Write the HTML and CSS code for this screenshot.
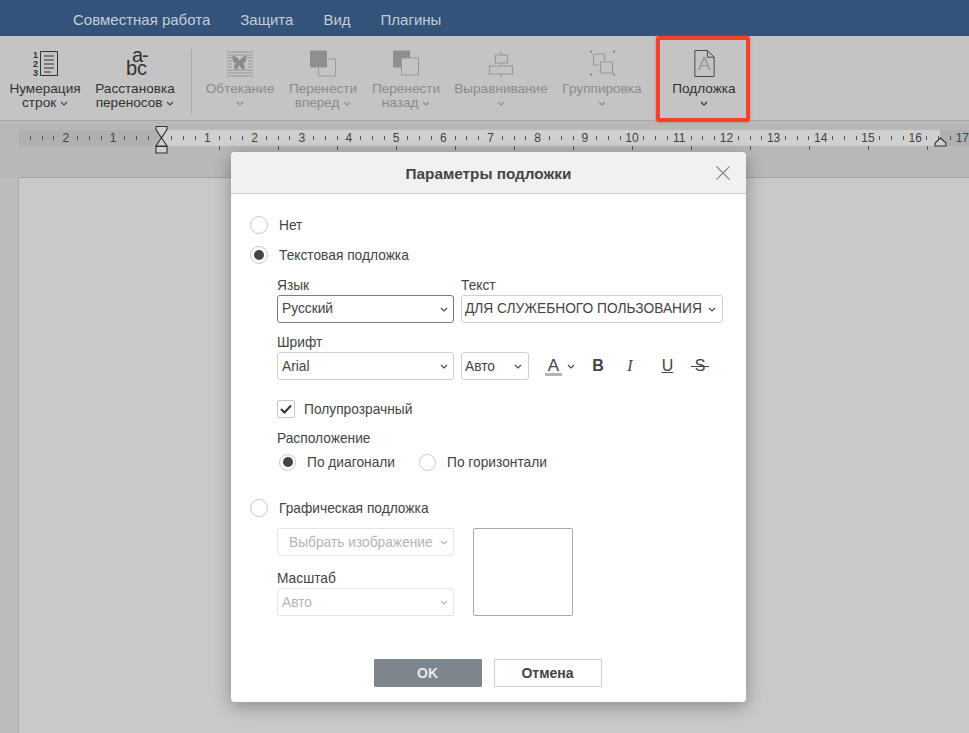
FILE: index.html
```html
<!DOCTYPE html>
<html lang="ru">
<head>
  <meta charset="UTF-8">
  <title>Параметры подложки</title>
  <link rel="stylesheet" href="styles.css">
</head>
<body>

  <svg class="sprite" width="0" height="0">
    <symbol id="chev" viewBox="0 0 8 5"><path d="M1 1l3 3 3-3" fill="none" stroke="currentColor" stroke-width="1.1"/></symbol>
  </svg>

  <nav class="tabs">
    <span>Совместная работа</span>
    <span>Защита</span>
    <span>Вид</span>
    <span>Плагины</span>
  </nav>

  <div class="toolbar">
    <div class="tool tool-num">
      <svg class="icon" width="28" height="27" viewBox="0 0 28 27">
        <text class="tiny"><tspan x="2" y="8">1</tspan><tspan x="2" y="17">2</tspan><tspan x="2" y="26">3</tspan></text>
        <path d="M9.500 1.500h17v24h-17zM13 6h10M13 10h10M13 14h10M13 18h10M13 22h7" fill="none" stroke="#333" stroke-width="1"/>
      </svg>
      <div class="label">Нумерация<br>строк <svg class="chev"><use href="#chev"/></svg></div>
    </div>
    <div class="tool tool-hyph">
      <svg class="icon" width="26" height="27" viewBox="0 0 26 27">
        <text class="big"><tspan x="10" y="12" letter-spacing="-1">a-</tspan><tspan x="4" y="25">bc</tspan></text>
      </svg>
      <div class="label">Расстановка<br>переносов <svg class="chev"><use href="#chev"/></svg></div>
    </div>
    <div class="divider"></div>
    <div class="tool off tool-wrap">
      <svg class="icon" width="28" height="26" viewBox="0 0 28 26">
        <path d="M1 1.500h26M1 4.500h26M1 7.500h5M22 7.500h5M1 10.500h5M22 10.500h5M1 13.500h5M22 13.500h5M1 16.500h5M22 16.500h5M1 19.500h26M1 22.500h26M1 25.500h26" stroke="#969696" stroke-width="1"/>
        <path d="M13.500 10C11 6 8 5 6.500 5.500 6 9 7 12 10 13c-2 1-2.500 4-1 6 2 .5 4-2 4.500-5 .5 3 2.500 5.500 4.500 5 1.500-2 1-5-1-6 3-1 4-4 3.500-7.500C19 5 16 6 13.500 10z" fill="#8c8c8c"/>
      </svg>
      <div class="label">Обтекание<br><svg class="chev"><use href="#chev"/></svg></div>
    </div>
    <div class="tool off tool-front">
      <svg class="icon" width="26" height="26" viewBox="0 0 26 26">
        <path d="M8.500 17v8.500h17V8.500H18" fill="none" stroke="#999" stroke-width="1"/>
        <rect x="0" y="0" width="17" height="17" rx="1" fill="#8f8f8f"/>
      </svg>
      <div class="label">Перенести<br>вперед <svg class="chev"><use href="#chev"/></svg></div>
    </div>
    <div class="tool off tool-back">
      <svg class="icon" width="26" height="26" viewBox="0 0 26 26">
        <rect x="0" y="0" width="17" height="17" fill="#8f8f8f"/>
        <rect x="8.500" y="7.500" width="17" height="17" fill="#c3c4c3" stroke="#999"/>
      </svg>
      <div class="label">Перенести<br>назад <svg class="chev"><use href="#chev"/></svg></div>
    </div>
    <div class="tool off tool-align">
      <svg class="icon" width="24" height="26" viewBox="0 0 24 26">
        <path d="M12 1v3.500M12 12.500v3M12 23.500v3.500M6.500 4.500h12v8h-12zM.5 15.500h23v8H.5z" fill="none" stroke="#999" stroke-width="1.200"/>
      </svg>
      <div class="label">Выравнивание<br><svg class="chev"><use href="#chev"/></svg></div>
    </div>
    <div class="tool off tool-group">
      <svg class="icon" width="25" height="26" viewBox="0 0 25 26">
        <path d="M3.500 3.500h11v7M8.500 14.500h-5v-11M10.500 11.500h12v11h-12z" fill="none" stroke="#999" stroke-width="1.200"/>
        <path d="M0 0h2v2H0zM23 0h2v2h-2zM0 23h2v2H0zM23 23h2v2h-2z" fill="#888"/>
      </svg>
      <div class="label">Группировка<br><svg class="chev"><use href="#chev"/></svg></div>
    </div>
    <div class="tool tool-mark">
      <svg class="icon" width="21" height="28" viewBox="0 0 21 28">
        <path d="M.5.500h13l7 7v20H.5zM13.500.500v7h7" fill="none" stroke="#444" stroke-width="1"/>
        <text x="3.500" y="21" class="mark-a">A</text>
      </svg>
      <div class="label">Подложка<br><svg class="chev chev-dark"><use href="#chev"/></svg></div>
      <div class="highlight"></div>
    </div>
  </div>

  <div class="ruler-area">
    <div class="ruler">
      <i></i><i></i><i></i><b>2</b><i></i><i></i><i></i><b>1</b><i></i><i></i><i></i><b></b>
      <i></i><i></i><i></i><b>1</b><i></i><i></i><i></i><b>2</b><i></i><i></i><i></i><b>3</b>
      <i></i><i></i><i></i><b>4</b><i></i><i></i><i></i><b>5</b><i></i><i></i><i></i><b>6</b>
      <i></i><i></i><i></i><b>7</b><i></i><i></i><i></i><b>8</b><i></i><i></i><i></i><b>9</b>
      <i></i><i></i><i></i><b>10</b><i></i><i></i><i></i><b>11</b><i></i><i></i><i></i><b>12</b>
      <i></i><i></i><i></i><b>13</b><i></i><i></i><i></i><b>14</b><i></i><i></i><i></i><b>15</b>
      <i></i><i></i><i></i><b>16</b><i></i><i></i><i></i><b>17</b>
      <svg class="marker-left" width="13" height="28" viewBox="0 0 13 28">
        <path d="M1 .5h11v3L1 20h11L1 3.500V.5" fill="#d0d0d0" stroke="#333" stroke-width="1.100"/>
        <path d="M1 20.500h11v6.500H1z" fill="#d0d0d0" stroke="#333" stroke-width="1.100"/>
      </svg>
      <svg class="marker-right" width="13" height="10" viewBox="0 0 13 10">
        <path d="M6.500 1L12 6v3H1V6z" fill="#d0d0d0" stroke="#333" stroke-width="1.100"/>
      </svg>
    </div>
    <div class="tabstops"></div>
  </div>

  <div class="canvas">
    <div class="page"></div>
  </div>

  <div class="dialog">
    <div class="dialog-head">
      Параметры подложки
      <svg class="close" width="14" height="14" viewBox="0 0 14 14"><path d="M.5.5l13 13M13.500.5l-13 13" stroke="#888" stroke-width="1.100"/></svg>
    </div>

    <div class="dialog-body">
      <div class="opt"><span class="radio"></span>Нет</div>
      <div class="opt opt-second"><span class="radio on"></span>Текстовая подложка</div>

      <div class="fields">
        <div class="field-row row-lang">
          <div class="field w177">
            <label>Язык</label>
            <div class="select active">Русский<svg class="chev"><use href="#chev"/></svg></div>
          </div>
          <div class="field w262">
            <label>Текст</label>
            <div class="select tight">ДЛЯ СЛУЖЕБНОГО ПОЛЬЗОВАНИЯ<svg class="chev"><use href="#chev"/></svg></div>
          </div>
        </div>

        <div class="field-row row-font">
          <div class="field w177">
            <label>Шрифт</label>
            <div class="select">Arial<svg class="chev"><use href="#chev"/></svg></div>
          </div>
          <div class="field w68">
            <div class="select tight">Авто<svg class="chev"><use href="#chev"/></svg></div>
          </div>
          <div class="fmt">
            <span class="fmt-color">A</span><svg class="chev"><use href="#chev"/></svg>
            <span class="fmt-b">B</span>
            <span class="fmt-i">I</span>
            <span class="fmt-u">U</span>
            <span class="fmt-s">S</span>
          </div>
        </div>

        <div class="check-row">
          <span class="check"><svg width="12" height="10" viewBox="0 0 12 10"><path d="M1 5l3.500 3.500L11 1.500" fill="none" stroke="#333" stroke-width="2"/></svg></span>
          Полупрозрачный
        </div>

        <div class="place-title">Расположение</div>
        <div class="place-row">
          <div class="opt small"><span class="radio on"></span>По диагонали</div>
          <div class="opt small"><span class="radio"></span>По горизонтали</div>
        </div>
      </div>

      <div class="opt opt-image"><span class="radio"></span>Графическая подложка</div>

      <div class="image-row">
        <div class="w177">
          <div class="select disabled center">Выбрать изображение<svg class="chev"><use href="#chev"/></svg></div>
          <label class="scale-label">Масштаб</label>
          <div class="select disabled">Авто<svg class="chev"><use href="#chev"/></svg></div>
        </div>
        <div class="preview"></div>
      </div>
    </div>

    <div class="dialog-foot">
      <button class="btn btn-ok">OK</button>
      <button class="btn">Отмена</button>
    </div>
  </div>

</body>
</html>
```

FILE: styles.css
```css
* {
  box-sizing: border-box;
}

html, body {
  height: 100%;
}

body {
  margin: 0;
  overflow: hidden;
  position: relative;
  display: flex;
  flex-direction: column;
  font-family: "Liberation Sans", Arial, sans-serif;
  font-size: 14px;
  color: #444;
  background: #bbb;
}

.sprite {
  position: absolute;
}

.chev {
  width: 8px;
  height: 5px;
  vertical-align: 1px;
  color: #444;
}

/* top tabs */
.tabs {
  height: 36px;
  flex: none;
  background: #34537a;
  color: #c3cdd9;
  display: flex;
  align-items: center;
  gap: 30px;
  padding: 3px 0 0 73px;
  font-size: 15px;
}

/* toolbar */
.toolbar {
  height: 85px;
  flex: none;
  background: #c3c4c3;
  border-bottom: 1px solid #a9a9a9;
  display: flex;
  align-items: flex-start;
  padding-top: 14px;
  font-size: 13.600px;
  color: #333;
}

.tool {
  position: relative;
  text-align: center;
  flex: none;
}

.tool .icon {
  display: block;
  margin: 0 auto;
  height: 27px;
  overflow: visible;
}

.label {
  margin-top: 5px;
  line-height: 14px;
  white-space: nowrap;
}

.off {
  color: #8b8c8b;
}

.off .chev {
  color: #8f8f8f;
}

.tiny {
  font: bold 9px "Liberation Sans", sans-serif;
  fill: #333;
}

.big {
  font: 20px "Liberation Sans", sans-serif;
  fill: #333;
}

.mark-a {
  font: 20px "Liberation Sans", sans-serif;
  fill: #9a9a9a;
}

.tool-num { width: 80px; margin-left: 5px; }
.tool-hyph { width: 90px; margin-left: 5px; }
.divider {
  width: 1px;
  height: 65px;
  margin: -1px 13px 0 11px;
  flex: none;
  background: #a9a9a9;
}
.tool-wrap { width: 70px; }
.tool-front { width: 72px; margin-left: 12px; }
.tool-back { width: 72px; margin-left: 11px; }
.tool-align { width: 98px; margin-left: 10px; }
.tool-group { width: 84px; margin-left: 10px; }
.tool-mark { width: 78px; margin-left: 21px; }

.chev-dark {
  color: #333;
}

.highlight {
  position: absolute;
  left: -9px;
  right: -7px;
  top: -14px;
  height: 86px;
  border: 4px solid #f4402f;
  border-radius: 3px;
  box-shadow: 0 0 3px rgba(244, 64, 47, .6);
}

/* ruler */
.ruler-area {
  flex: none;
  height: 56px;
  padding: 9px 0 0 19px;
  background: #b8b8b8;
}

.ruler {
  position: relative;
  height: 16px;
  display: flex;
  padding-left: 5.500px;
  background: linear-gradient(90deg, #b0b0b0 142px, #d0d0d0 142px, #d0d0d0 921px, #b0b0b0 921px);
}

.ruler i, .ruler b {
  flex: none;
  width: 11.800px;
  text-align: center;
  font: 12px/16px "Liberation Sans", sans-serif;
  color: #444;
}

.ruler i {
  background: linear-gradient(#555, #555) center / 1px 4px no-repeat;
}

.ruler b {
  display: flex;
  justify-content: center;
  white-space: nowrap;
}

.marker-left {
  position: absolute;
  left: 136px;
  top: -4px;
  overflow: visible;
}

.marker-right {
  position: absolute;
  left: 915px;
  top: 7px;
}

.tabstops {
  height: 5px;
  margin-left: 200px;
  background: repeating-linear-gradient(90deg, #555 0, #555 1px, transparent 1px, transparent 59px) 0 0 / 100% 4px no-repeat;
}

/* document area */
.canvas {
  flex: 1;
  padding-left: 18px;
  background: #bcbcbc;
  display: flex;
}

.page {
  flex: 1;
  background: #c9c9c9;
  border-left: 1px solid #a9a9a9;
  border-top: 1px solid #a3a3a3;
}

/* dialog */
.dialog {
  position: absolute;
  left: 231px;
  top: 152px;
  width: 515px;
  height: 550px;
  background: #fff;
  border-radius: 4px;
  box-shadow: 0 4px 18px rgba(0, 0, 0, .32);
  display: flex;
  flex-direction: column;
}

.dialog-head {
  position: relative;
  height: 42px;
  flex: none;
  line-height: 43px;
  text-align: center;
  font-weight: bold;
  font-size: 15.300px;
  color: #444;
  background: #f1f1f1;
  border-bottom: 1px solid #cbcbcb;
  border-radius: 4px 4px 0 0;
}

.close {
  position: absolute;
  right: 16px;
  top: 14px;
}

.dialog-body {
  flex: 1;
  padding: 22px 19px 0;
  font-size: 13.750px;
}

.opt {
  display: flex;
  align-items: center;
  gap: 11px;
  height: 18px;
}

.opt-second {
  margin-top: 12px;
}

.opt-image {
  margin-top: 28px;
}

.radio {
  width: 18px;
  height: 18px;
  flex: none;
  border: 1px solid #c8c8c8;
  border-radius: 50%;
  background: #fff;
  display: flex;
  align-items: center;
  justify-content: center;
}

.radio.on::after {
  content: "";
  width: 10px;
  height: 10px;
  border-radius: 50%;
  background: #444;
}

.fields {
  padding-left: 27px;
}

label {
  display: block;
  height: 14px;
  line-height: 14px;
  margin-bottom: 2px;
  color: #444;
}

.field-row {
  display: flex;
  gap: 7px;
  align-items: flex-end;
}

.row-lang { margin-top: 15px; }
.row-font { margin-top: 13px; }

.row-lang .select {
  padding-bottom: 2px;
}

.row-lang .select .chev {
  margin-top: 2px;
}

.w177 { width: 177px; flex: none; }
.w262 { width: 262px; flex: none; }
.w68 { width: 68px; flex: none; }

.select {
  height: 28px;
  border: 1px solid #cfcfcf;
  border-radius: 3px;
  padding: 0 5px 0 4px;
  display: flex;
  align-items: center;
  justify-content: space-between;
  white-space: nowrap;
  color: #444;
  background: #fff;
}

.select .chev {
  vertical-align: 0;
}

.select.tight {
  padding-left: 3px;
  padding-right: 6px;
}

.select.active {
  border-color: #7d7d7d;
}

.select.disabled {
  color: #b4b4b4;
  border-color: #e4e4e4;
}

.select.disabled .chev {
  color: #b4b4b4;
}

.select.center {
  padding-left: 11px;
}

.fmt {
  height: 28px;
  display: flex;
  align-items: center;
  margin-left: 9px;
  font-size: 16px;
  color: #444;
}

.fmt .chev {
  margin-left: 5px;
}

.fmt span {
  text-align: center;
}

.fmt-color {
  width: 17px;
  border-bottom: 3px solid #b4b4b4;
  line-height: 15px;
  font-size: 17px;
  margin-top: 2px;
}

.fmt-b { font-weight: bold; margin-left: 16px; width: 14px; }
.fmt-i { font-style: italic; font-family: "Liberation Serif", serif; margin-left: 20px; width: 10px; }
.fmt-u { text-decoration: underline; margin-left: 26px; width: 13px; }
.fmt-s {
  margin-left: 17px;
  width: 18px;
  background: linear-gradient(#444, #444) center / 100% 1px no-repeat;
}

.check-row {
  display: flex;
  align-items: center;
  gap: 9px;
  margin-top: 20px;
  height: 18px;
}

.check {
  width: 18px;
  height: 18px;
  border: 1px solid #c8c8c8;
  border-radius: 2px;
  display: flex;
  align-items: center;
  justify-content: center;
}

.place-title {
  margin-top: 14px;
  line-height: 14px;
}

.place-row {
  display: flex;
  gap: 24px;
  margin-top: 7px;
  padding-left: 2px;
}

.place-row .radio {
  width: 17px;
  height: 17px;
}

.image-row {
  display: flex;
  gap: 19px;
  margin-top: 11px;
  padding-left: 27px;
}

.scale-label {
  margin-top: 16px;
}

.preview {
  width: 100px;
  height: 88px;
  border: 1px solid #aaa;
  border-radius: 2px;
}

.dialog-foot {
  flex: none;
  height: 43px;
  padding-right: 2px;
  display: flex;
  justify-content: center;
  gap: 12px;
}

.btn {
  width: 108px;
  height: 28px;
  border: 1px solid #cfcfcf;
  background: #fff;
  font: bold 14px "Liberation Sans", sans-serif;
  color: #444;
  padding: 0;
}

.btn-ok {
  background: #7d868d;
  border-color: #7d868d;
  color: #e6e8ea;
  border-radius: 1px;
}
```
